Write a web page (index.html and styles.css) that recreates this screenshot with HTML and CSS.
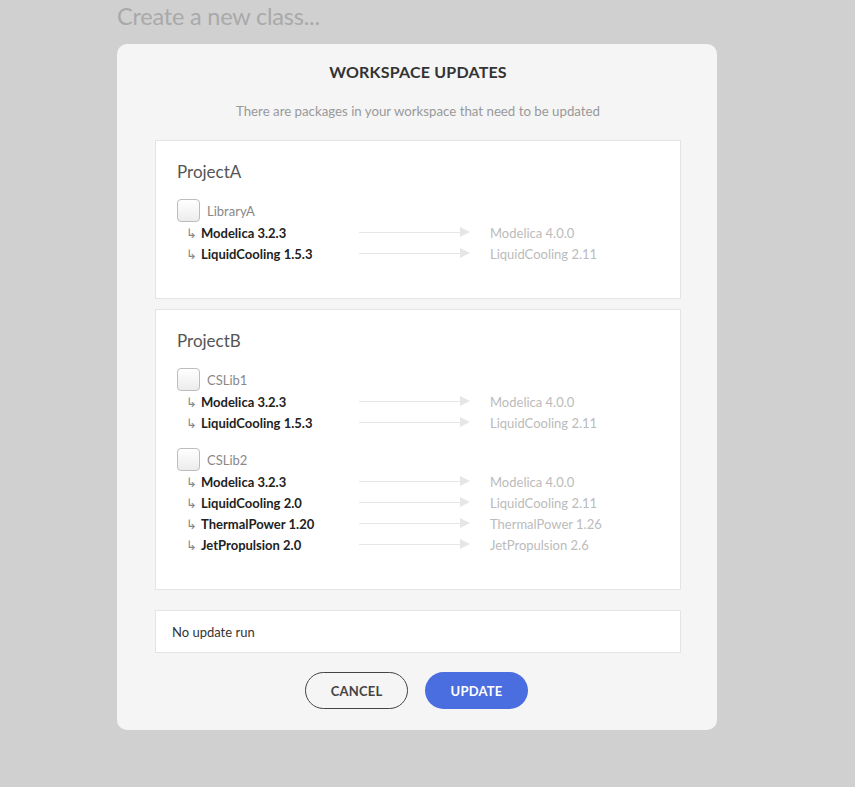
FILE: index.html
```html
<!DOCTYPE html>
<html>
<head>
<meta charset="utf-8">
<link rel="stylesheet" href="styles.css">
</head>
<body>
<div class="page">
  <div class="backdrop-title">Create a new class...</div>
  <div class="modal">
    <h1 class="modal-title">WORKSPACE UPDATES</h1>
    <p class="modal-sub">There are packages in your workspace that need to be updated</p>

    <section class="card project">
      <h2 class="project-name">ProjectA</h2>
      <div class="lib">
        <label class="lib-head"><span class="checkbox"></span><span class="lib-name">LibraryA</span></label>
        <div class="dep"><span class="dep-from"><span class="hook">↳</span>Modelica 3.2.3</span><span class="arrow"></span><span class="dep-to">Modelica 4.0.0</span></div>
        <div class="dep"><span class="dep-from"><span class="hook">↳</span>LiquidCooling 1.5.3</span><span class="arrow"></span><span class="dep-to">LiquidCooling 2.11</span></div>
      </div>
    </section>

    <section class="card project">
      <h2 class="project-name">ProjectB</h2>
      <div class="lib">
        <label class="lib-head"><span class="checkbox"></span><span class="lib-name">CSLib1</span></label>
        <div class="dep"><span class="dep-from"><span class="hook">↳</span>Modelica 3.2.3</span><span class="arrow"></span><span class="dep-to">Modelica 4.0.0</span></div>
        <div class="dep"><span class="dep-from"><span class="hook">↳</span>LiquidCooling 1.5.3</span><span class="arrow"></span><span class="dep-to">LiquidCooling 2.11</span></div>
      </div>
      <div class="lib">
        <label class="lib-head"><span class="checkbox"></span><span class="lib-name">CSLib2</span></label>
        <div class="dep"><span class="dep-from"><span class="hook">↳</span>Modelica 3.2.3</span><span class="arrow"></span><span class="dep-to">Modelica 4.0.0</span></div>
        <div class="dep"><span class="dep-from"><span class="hook">↳</span>LiquidCooling 2.0</span><span class="arrow"></span><span class="dep-to">LiquidCooling 2.11</span></div>
        <div class="dep"><span class="dep-from"><span class="hook">↳</span>ThermalPower 1.20</span><span class="arrow"></span><span class="dep-to">ThermalPower 1.26</span></div>
        <div class="dep"><span class="dep-from"><span class="hook">↳</span>JetPropulsion 2.0</span><span class="arrow"></span><span class="dep-to">JetPropulsion 2.6</span></div>
      </div>
    </section>

    <section class="card status">No update run</section>

    <div class="actions">
      <button class="btn btn-cancel">CANCEL</button>
      <button class="btn btn-update">UPDATE</button>
    </div>
  </div>
</div>
</body>
</html>
```

FILE: styles.css
```css
* { box-sizing: border-box; }
html, body { margin: 0; padding: 0; }
body {
  background: #d0d0d0;
  font-family: Lato, "Noto Sans", sans-serif;
  width: 855px;
  height: 787px;
  overflow: hidden;
}
.page {
  padding-left: 117px;
}
.backdrop-title {
  font-size: 23.5px;
  color: #a9a9a9;
  height: 44px;
  line-height: 32px;
  letter-spacing: -0.2px;
}
.modal {
  width: 600px;
  background: #f5f5f5;
  border-radius: 10px;
  padding: 18px 36px 21px 38px;
}
.modal-title {
  margin: 0;
  text-align: center;
  font-size: 16px;
  font-weight: 700;
  color: #333;
  line-height: 20px;
  letter-spacing: 0.2px;
}
.modal-sub {
  margin: 19px 0 19px;
  text-align: center;
  font-size: 13.25px;
  color: #999;
  line-height: 20px;
}
.card {
  background: #fff;
  border: 1px solid #e4e4e4;
}
.project {
  padding: 20px 21px 34px 21px;
  margin-bottom: 10px;
}
.project-name {
  margin: 0 0 15px;
  font-size: 17px;
  font-weight: 400;
  color: #555;
  line-height: 22px;
}
.lib + .lib {
  margin-top: 14px;
}
.lib-head {
  display: flex;
  align-items: center;
  gap: 7px;
  height: 24px;
}
.checkbox {
  width: 23px;
  height: 23px;
  border: 1px solid #bdbdbd;
  border-radius: 4px;
  background: linear-gradient(#ffffff, #ececec);
}
.lib-name {
  font-size: 13px;
  color: #888;
  padding-top: 2px;
}
.dep {
  display: grid;
  grid-template-columns: 182px 111px 1fr;
  align-items: center;
  height: 21px;
  font-size: 13px;
}
.dep-from {
  color: #222;
  font-weight: 700;
  padding-left: 9px;
}
.hook {
  color: #888;
  font-weight: 400;
  margin-right: 4px;
}
.arrow {
  position: relative;
  height: 1px;
  background: #e6e6e6;
  margin-right: 10px;
}
.arrow::after {
  content: "";
  position: absolute;
  right: -10px;
  top: -5px;
  border-left: 10px solid #e6e6e6;
  border-top: 5.5px solid transparent;
  border-bottom: 5.5px solid transparent;
}
.dep-to {
  color: #bbb;
  padding-left: 20px;
}
.status {
  margin-top: 20px;
  height: 43px;
  display: flex;
  align-items: center;
  padding-left: 16px;
  font-size: 13px;
  color: #333;
}
.actions {
  display: flex;
  justify-content: center;
  gap: 17px;
  margin-top: 19px;
  padding-right: 3px;
}
.btn {
  width: 103px;
  height: 37px;
  border-radius: 19px;
  font-family: Lato, "Noto Sans", sans-serif;
  font-size: 13px;
  font-weight: 700;
  letter-spacing: 0.2px;
  cursor: pointer;
}
.btn-cancel {
  background: #f5f5f5;
  border: 1px solid #444;
  color: #444;
}
.btn-update {
  background: #4a6ee0;
  border: none;
  color: #fff;
}
```
